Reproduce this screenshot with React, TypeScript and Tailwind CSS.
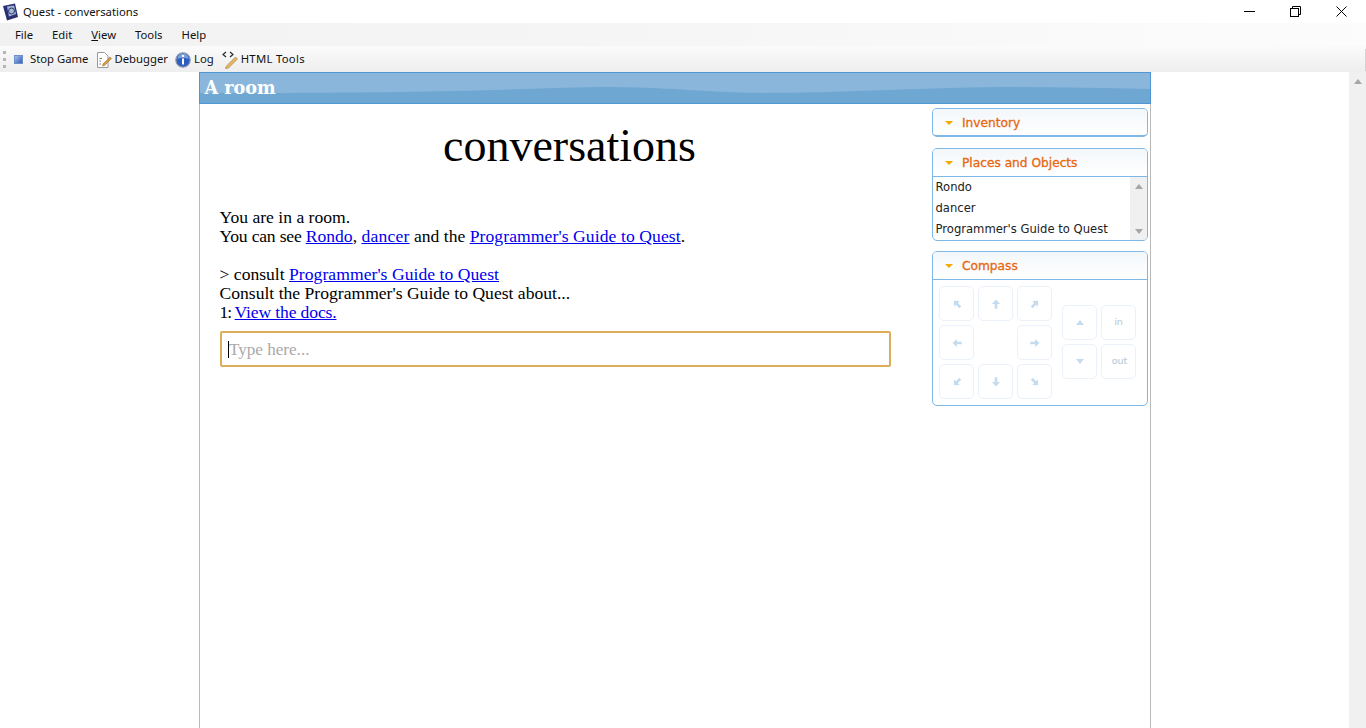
import React from "react";

function Wave() {
  return (
    <svg className="absolute inset-0 w-full h-full" viewBox="0 0 950 30" preserveAspectRatio="none">
      <path d="M0 30V20C60 20 130 20 200 19C280 18 340 15 400 14C470 14 500 19 560 20C640 20 720 15 800 14C850 14 900 15 950 16V30Z" fill="#6fa7d3" />
    </svg>
  );
}

function PanelHead({ title }: { title: string }) {
  return (
    <div className="h-[27px] flex items-center pl-[12px] bg-gradient-to-b from-[#f3f7fa] to-white">
      <svg width="8" height="4" viewBox="0 0 8 4" className="mr-[9px] shrink-0"><path d="M0 0H8L4 4Z" fill="#f6a900" /></svg>
      <span className="mt-[2px] font-['DejaVu_Sans',sans-serif] text-[12.2px] font-normal text-[#e8670f] leading-none [-webkit-text-stroke:0.3px_#e8670f]">{title}</span>
    </div>
  );
}

function CBtn({ children }: { children?: React.ReactNode }) {
  return (
    <div className="w-[35px] h-[35px] rounded-[5px] border-[1.5px] border-[#ebf1f8] flex items-center justify-center text-[#bccfe0] font-['DejaVu_Sans',sans-serif] text-[9.5px] [-webkit-text-stroke:0.2px_#bccfe0]">
      {children}
    </div>
  );
}

function Arrow({ rot }: { rot: number }) {
  return (
    <svg width="10" height="10" viewBox="0 0 9 9" style={{ transform: `rotate(${rot}deg)` }}>
      <path d="M4.5 0.5L8.2 4.4H5.7V8.8H3.3V4.4H0.8Z" fill="#c5dbee" />
    </svg>
  );
}

function Tri({ down }: { down?: boolean }) {
  return (
    <svg width="8" height="5" viewBox="0 0 8 5"><path d={down ? "M0 0H8L4 5Z" : "M4 0L8 5H0Z"} fill="#c5dbee" /></svg>
  );
}

function Link({ children }: { children: React.ReactNode }) {
  return <a className="text-[#0000ee] underline">{children}</a>;
}

export default function App() {
  return (
    <div className="h-[728px] w-[1366px] overflow-hidden bg-white flex flex-col font-['Liberation_Sans',sans-serif]">
      <div className="h-[23px] shrink-0 flex items-center text-[#111] font-['Noto_Sans',sans-serif]">
        <svg width="17" height="18" viewBox="0 0 17 18" className="ml-[2px] mr-[4px]">
          <path d="M1 3L13 0.5L16 14L5 17.5Z" fill="#28306f" />
          <path d="M5 3.5L12 2.5L14 11L7 13.5Z" fill="#a7b7d8" />
          <circle cx="9.5" cy="8" r="3" fill="none" stroke="#2b376f" strokeWidth="1" />
        </svg>
        <span className="text-[11.3px] leading-none">Quest - conversations</span>
        <div className="ml-auto flex items-center">
          <svg width="11" height="11" viewBox="0 0 11 11" className="mr-[35px]"><path d="M0 5.5H11" stroke="#000" strokeWidth="1" /></svg>
          <svg width="11" height="11" viewBox="0 0 11 11" className="mr-[35px]">
            <rect x="0.5" y="2.5" width="8" height="8" fill="none" stroke="#000" />
            <path d="M2.5 2.5V0.5H10.5V8.5H8.5" fill="none" stroke="#000" />
          </svg>
          <svg width="11" height="11" viewBox="0 0 11 11" className="mr-[19px]"><path d="M0.5 0.5L10.5 10.5M10.5 0.5L0.5 10.5" stroke="#000" /></svg>
        </div>
      </div>
      <div className="h-[23px] shrink-0 flex items-center bg-gradient-to-r from-[#f1f1f1] via-[#f6f6f6] to-[#fcfcfc] text-[11.3px] text-[#111] font-['Noto_Sans',sans-serif] pt-[1px]">
        <span className="ml-[15px]">File</span>
        <span className="ml-[19px]">Edit</span>
        <span className="ml-[19px]"><span className="underline">V</span>iew</span>
        <span className="ml-[19px]">Tools</span>
        <span className="ml-[19px]">Help</span>
      </div>
      <div className="h-[26px] shrink-0 flex items-center bg-gradient-to-b from-[#fbfbfb] to-[#eeeeee] text-[11.3px] text-[#111] font-['Noto_Sans',sans-serif] pt-[1px]">
        <div className="ml-[3px] w-[3px] h-[17px] border-l-[3px] border-dotted border-[#b5b5b5]" />
        <div className="ml-[8px] w-[9px] h-[9px] bg-gradient-to-br from-[#a9c0ea] to-[#2f5db5] border border-[#6f8fc8]" />
        <span className="ml-[7px]">Stop Game</span>
        <svg width="16" height="16" viewBox="0 0 16 16" className="ml-[7px]">
          <path d="M1.5 0.5H8.5L12 4V15.5H1.5Z" fill="#fff" stroke="#9a9a9a" />
          <path d="M3.5 6.5H6M3.5 9H5M3.5 12H5" stroke="#777" />
          <path d="M7 12L14 5L15.5 6.5L8.5 13.5L6.5 14Z" fill="#d99a3a" stroke="#8a6a2c" strokeWidth="0.5" />
        </svg>
        <span className="ml-[3px]">Debugger</span>
        <svg width="16" height="16" viewBox="0 0 16 16" className="ml-[7px]">
          <circle cx="8" cy="8" r="7.2" fill="#2d5fc0" stroke="#8e9aad" strokeWidth="1.2" />
          <path d="M2.5 7A5.5 5.5 0 0 1 13.5 7Q8 4.5 2.5 7Z" fill="#7d9fe0" />
          <rect x="7" y="3" width="2" height="2" fill="#fff" />
          <rect x="7" y="6.5" width="2" height="6" fill="#fff" />
        </svg>
        <span className="ml-[3px]">Log</span>
        <svg width="17" height="18" viewBox="0 0 17 18" className="ml-[8px]">
          <path d="M4 1L1 3.5L4 6M8 1L11 3.5L8 6" fill="none" stroke="#222" strokeWidth="1.1" />
          <path d="M4.5 15L13.5 6L15.5 8L6.5 17L3.5 17.5Z" fill="#e8b560" stroke="#9a7a3c" strokeWidth="0.6" />
        </svg>
        <span className="ml-[2px] tracking-[0.3px]">HTML Tools</span>
        <div className="ml-auto w-[1px] h-[22px] bg-[#d4d4d4]" />
      </div>
      <div className="flex-1 flex min-h-0">
        <div className="w-[199px] shrink-0" />
        <div className="w-[952px] shrink-0 border-x border-[#b9b9b9] flex flex-col">
          <div className="relative h-[32px] border border-[#4f96d4] -mx-px bg-[#89b6da] overflow-hidden shrink-0">
            <Wave />
            <span className="relative block pl-[4.5px] font-['DejaVu_Serif',serif] font-bold text-[17.6px] leading-[30px] text-white">A room</span>
          </div>
          <div className="flex flex-1 min-h-0">
            <div className="w-[732px] shrink-0 font-['Liberation_Serif',serif] text-[17.6px] leading-[19px] text-black pl-[20px]">
              <h1 className="text-[46px] leading-[48px] font-normal text-center w-[699px] mt-[18px]">conversations</h1>
              <div className="mt-[38px] -ml-[0.5px]">
                <p>You are in a room.</p>
                <p><span className="tracking-[-0.2px]">You can see </span><Link>Rondo</Link>, <span className="tracking-[0.2px]"><Link>dancer</Link></span> and the <span className="tracking-[0.08px]"><Link>Programmer's Guide to Quest</Link></span>.</p>
                <p className="mt-[19px]">&gt; consult <span className="tracking-[0.04px]"><Link>Programmer's Guide to Quest</Link></span></p>
                <p>Consult the Programmer's Guide to Quest about...</p>
                <p><span className="tracking-[-1px]">1: </span><span className="tracking-[-0.15px]"><Link>View the docs.</Link></span></p>
              </div>
              <div className="mt-[9px] w-[671px] h-[36px] border-2 border-[#dcae5a] rounded-[2px] flex items-center pl-[6px] text-[#a9a9a9] text-[17.1px]">
                <span className="w-px h-[17px] bg-black" />
                <span>Type here...</span>
              </div>
            </div>
            <div className="w-[216px] shrink-0 pt-[4px] flex flex-col font-['DejaVu_Sans',sans-serif]">
              <div className="h-[29px] rounded-[5px] border border-[#7db8e8] border-b-2 overflow-hidden">
                <PanelHead title="Inventory" />
              </div>
              <div className="mt-[11px] h-[93px] rounded-[5px] border border-[#7db8e8] overflow-hidden">
                <div className="border-b border-[#7db8e8]"><PanelHead title="Places and Objects" /></div>
                <div className="flex h-[64px] text-[#222] text-[11.6px]">
                  <div className="flex-1 pl-[2.5px] leading-[21px]">
                    <div>Rondo</div>
                    <div>dancer</div>
                    <div className="whitespace-nowrap">Programmer's Guide to Quest</div>
                  </div>
                  <div className="w-[17px] bg-[#f0f0f0] flex flex-col items-center justify-between py-[7px]">
                    <svg width="8" height="5" viewBox="0 0 8 5"><path d="M4 0L8 5H0Z" fill="#a6a6a6" /></svg>
                    <svg width="8" height="5" viewBox="0 0 8 5"><path d="M0 0H8L4 5Z" fill="#a6a6a6" /></svg>
                  </div>
                </div>
              </div>
              <div className="mt-[10px] h-[155px] rounded-[5px] border border-[#7db8e8] overflow-hidden">
                <div className="border-b border-[#7db8e8]"><PanelHead title="Compass" /></div>
                <div className="flex pl-[6px] pt-[6px]">
                  <div className="grid grid-cols-[35px_35px_35px] grid-rows-[35px_35px_35px] gap-[4px]">
                    <CBtn><Arrow rot={-45} /></CBtn>
                    <CBtn><Arrow rot={0} /></CBtn>
                    <CBtn><Arrow rot={45} /></CBtn>
                    <CBtn><Arrow rot={-90} /></CBtn>
                    <div />
                    <CBtn><Arrow rot={90} /></CBtn>
                    <CBtn><Arrow rot={-135} /></CBtn>
                    <CBtn><Arrow rot={180} /></CBtn>
                    <CBtn><Arrow rot={135} /></CBtn>
                  </div>
                  <div className="ml-[10px] mt-[19px] grid grid-cols-[35px_35px] grid-rows-[35px_35px] gap-[4px]">
                    <CBtn><Tri /></CBtn>
                    <CBtn>in</CBtn>
                    <CBtn><Tri down /></CBtn>
                    <CBtn><span className="pl-[2px]">out</span></CBtn>
                  </div>
                </div>
              </div>
            </div>
          </div>
        </div>
        <div className="flex-1 flex justify-end">
          <div className="w-[17px] bg-[#f0f0f0] flex flex-col items-center pt-[7px]">
            <svg width="8" height="5" viewBox="0 0 8 5"><path d="M4 0L8 5H0Z" fill="#a6a6a6" /></svg>
          </div>
        </div>
      </div>
    </div>
  );
}
